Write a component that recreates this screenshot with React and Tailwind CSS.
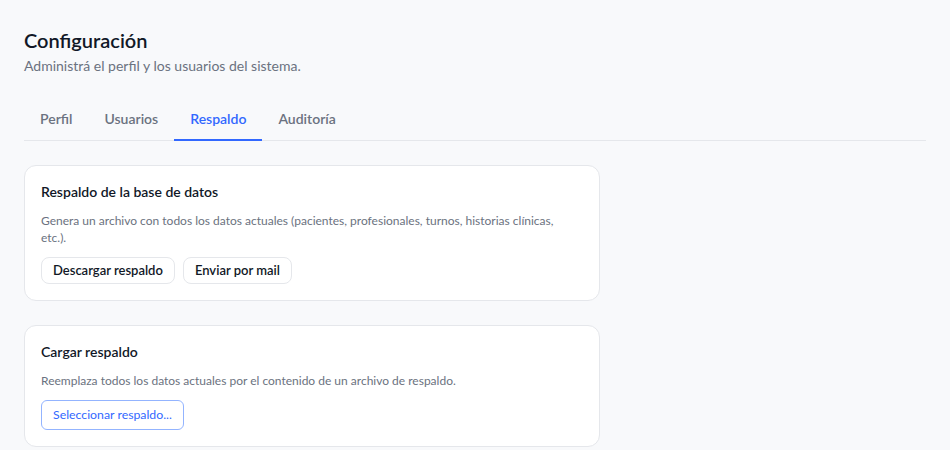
import React, { useState } from "react";

const TABS = ["Perfil", "Usuarios", "Respaldo", "Auditoría"];

const Card = ({ title, children }) => (
  <section className="w-full max-w-[576px] rounded-xl border border-[#e5e7eb] bg-white px-4 pb-4 pt-4">
    <h2 className="text-[14px] font-semibold leading-5 text-[#111827]">
      {title}
    </h2>
    {children}
  </section>
);

export default function App() {
  const [tab, setTab] = useState("Respaldo");

  return (
    <div className="min-h-screen bg-[#f8f9fb] px-6 pt-[26px] font-['Lato',sans-serif]">
      {/* HEADER */}
      <h1 className="text-[20px] font-semibold leading-7 text-[#111827]">
        Configuración
      </h1>
      <p className="mt-0.5 text-[14px] leading-5 text-[#6b7280]">
        Administrá el perfil y los usuarios del sistema.
      </p>

      {/* TABS */}
      <nav className="mt-[25px] flex border-b border-[#e5e7eb]">
        {TABS.map((t) => (
          <button
            key={t}
            type="button"
            onClick={() => setTab(t)}
            className={`-mb-px border-b-2 px-4 pb-[10px] pt-2 text-[14px] font-semibold leading-5 ${
              tab === t
                ? "border-[#3268ff] text-[#3268ff]"
                : "border-transparent text-[#6b7280]"
            }`}
          >
            {t}
          </button>
        ))}
      </nav>

      {/* CARDS */}
      <div className="mt-6 flex flex-col gap-6">
        <Card title="Respaldo de la base de datos">
          <p className="mt-[10px] pr-6 text-[12px] leading-[17px] text-[#6b7280]">
            Genera un archivo con todos los datos actuales (pacientes,
            profesionales, turnos, historias clínicas, etc.).
          </p>
          <div className="mt-[11px] flex gap-2">
            <button
              type="button"
              className="h-[27px] rounded-lg border border-[#e5e7eb] bg-white px-[11px] text-[13px] font-semibold leading-[19px] text-[#111827]"
            >
              Descargar respaldo
            </button>
            <button
              type="button"
              className="h-[27px] rounded-lg border border-[#e5e7eb] bg-white px-[11px] text-[13px] font-semibold leading-[19px] text-[#111827]"
            >
              Enviar por mail
            </button>
          </div>
        </Card>

        <Card title="Cargar respaldo">
          <p className="mt-[10px] text-[12px] leading-[17px] text-[#6b7280]">
            Reemplaza todos los datos actuales por el contenido de un archivo
            de respaldo.
          </p>
          <div className="mt-[11px] flex">
            <button
              type="button"
              className="h-[30px] rounded-md border border-[#93b4ff] bg-white px-[11px] text-[12.3px] leading-[18px] text-[#3268ff]"
            >
              Seleccionar respaldo...
            </button>
          </div>
        </Card>
      </div>
    </div>
  );
}
